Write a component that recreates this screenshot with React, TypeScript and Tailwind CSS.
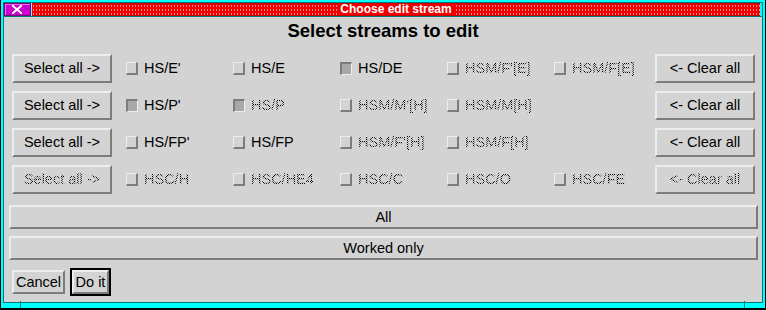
import React from "react";

type Item = { label: string; enabled?: boolean; checked?: boolean } | null;
type Row = { active: boolean; items: Item[] };

const rows: Row[] = [
  {
    active: true,
    items: [
      { label: "HS/E'", enabled: true },
      { label: "HS/E", enabled: true },
      { label: "HS/DE", enabled: true, checked: true },
      { label: "HSM/F'[E]" },
      { label: "HSM/F[E]" },
    ],
  },
  {
    active: true,
    items: [
      { label: "HS/P'", enabled: true, checked: true },
      { label: "HS/P", checked: true },
      { label: "HSM/M'[H]" },
      { label: "HSM/M[H]" },
      null,
    ],
  },
  {
    active: true,
    items: [
      { label: "HS/FP'", enabled: true },
      { label: "HS/FP", enabled: true },
      { label: "HSM/F'[H]" },
      { label: "HSM/F[H]" },
      null,
    ],
  },
  {
    active: false,
    items: [
      { label: "HSC/H" },
      { label: "HSC/HE4" },
      { label: "HSC/C" },
      { label: "HSC/O" },
      { label: "HSC/FE" },
    ],
  },
];

// 無効なテキストは X 風の網掛け（stipple）で描く
function Label({ text, enabled }: { text: string; enabled?: boolean }) {
  if (enabled) return <span className="text-black">{text}</span>;
  return (
    <span className="text-transparent bg-clip-text bg-[image:repeating-conic-gradient(#000_0%_25%,transparent_0%_50%)] bg-[length:2px_2px]">
      {text}
    </span>
  );
}

function Box({ checked }: { checked?: boolean }) {
  if (checked) {
    return (
      <span className="block w-[12px] h-[13px] shrink-0 bg-[#a8a8a8] border-t-2 border-l-2 border-r border-b border-t-[#7c7c7c] border-l-[#7c7c7c] border-r-[#ededed] border-b-[#ededed]" />
    );
  }
  return (
    <span className="block w-[12px] h-[13px] shrink-0 border-t border-l border-r-2 border-b-2 border-t-[#ededed] border-l-[#ededed] border-r-[#7c7c7c] border-b-[#7c7c7c]" />
  );
}

function Raised({ children, className = "" }: { children: React.ReactNode; className?: string }) {
  return (
    <div
      className={`flex items-center justify-center border-2 border-t-[#ededed] border-l-[#ededed] border-r-[#7c7c7c] border-b-[#7c7c7c] ${className}`}
    >
      {children}
    </div>
  );
}

export default function App() {
  return (
    <div className="w-[766px] h-[310px] bg-[#00ffff] border-l border-r border-b-2 border-black pt-[2px] pl-[2px] pr-[2px] pb-[5px] relative font-['Liberation_Sans',Arial,sans-serif] text-[14.5px] leading-none select-none">
      {/* 枠の角の切れ目 */}
      <span className="absolute left-[19px] bottom-0 w-px h-[7px] bg-[#008080]" />
      <span className="absolute left-[743px] bottom-0 w-px h-[7px] bg-[#008080]" />

      <div className="w-[760px] h-[301px] border border-[#007878] flex flex-col">
        {/* title bar */}
        <div className="h-[13px] flex shrink-0">
          <div className="w-[27px] h-full bg-[#cc00cc] border border-[#7a007a] shadow-[inset_1px_1px_0_#ff66ff] flex items-center pl-[7px]">
            <svg width="10" height="9" viewBox="0 0 10 9">
              <path d="M1.5 1.5 L8.5 7.5 M8.5 1.5 L1.5 7.5" stroke="#fff" strokeWidth="2" />
              <rect x="0" y="0" width="2" height="2" fill="#fff" />
              <rect x="8" y="0" width="2" height="2" fill="#fff" />
              <rect x="0" y="7" width="2" height="2" fill="#fff" />
              <rect x="8" y="7" width="2" height="2" fill="#fff" />
            </svg>
          </div>
          <div className="w-px h-full bg-[#66ffff]" />
          <div className="w-[728px] h-full bg-[#f00000] bg-[image:radial-gradient(circle,#ff8a8a_0.6px,transparent_0.9px)] bg-[length:3px_4px] border-y border-[#c80000] flex items-center justify-center">
            <span className="bg-[#f00000] px-[3px] text-white font-bold text-[12px] leading-[11px]">
              Choose edit stream
            </span>
          </div>
          <div className="w-[2px] h-full bg-[#00ffff]" />
        </div>
        <div className="h-px bg-[#007878] shrink-0" />

        {/* content */}
        <div className="h-[285px] bg-[#d3d3d3] flex flex-col pt-[4px]">
          <h1 className="text-center font-bold text-[18.5px] leading-[20px] text-black">
            Select streams to edit
          </h1>

          <div className="mt-[13px] flex flex-col gap-[8px] pl-[8px] pr-[7px]">
            {rows.map((row, i) => (
              <div key={i} className="flex items-center h-[29px]">
                <Raised className="w-[100px] h-[29px]">
                  <Label text="Select all ->" enabled={row.active} />
                </Raised>
                <div className="ml-[13px] flex flex-1 items-center">
                  {row.items.map((it, j) => (
                    <div key={j} className={`flex items-center ${j < 4 ? "w-[107px]" : "flex-1"}`}>
                      {it && (
                        <>
                          <span className="ml-px">
                            <Box checked={it.checked} />
                          </span>
                          <span className="ml-[6px]">
                            <Label text={it.label} enabled={it.enabled} />
                          </span>
                        </>
                      )}
                    </div>
                  ))}
                </div>
                <Raised className="w-[100px] h-[29px]">
                  <Label text="<- Clear all" enabled={row.active} />
                </Raised>
              </div>
            ))}
          </div>

          <div className="mt-[11px] flex flex-col gap-[7px] pl-[5px] pr-[4px]">
            <Raised className="h-[24px]">All</Raised>
            <Raised className="h-[24px]">Worked only</Raised>
          </div>

          <div className="mt-[8px] pl-[8px] flex items-center gap-[5px]">
            <Raised className="h-[24px] w-[53px]">Cancel</Raised>
            <div className="border-2 border-black">
              <Raised className="h-[24px] w-[37px]">Do it</Raised>
            </div>
          </div>
        </div>
      </div>
    </div>
  );
}
